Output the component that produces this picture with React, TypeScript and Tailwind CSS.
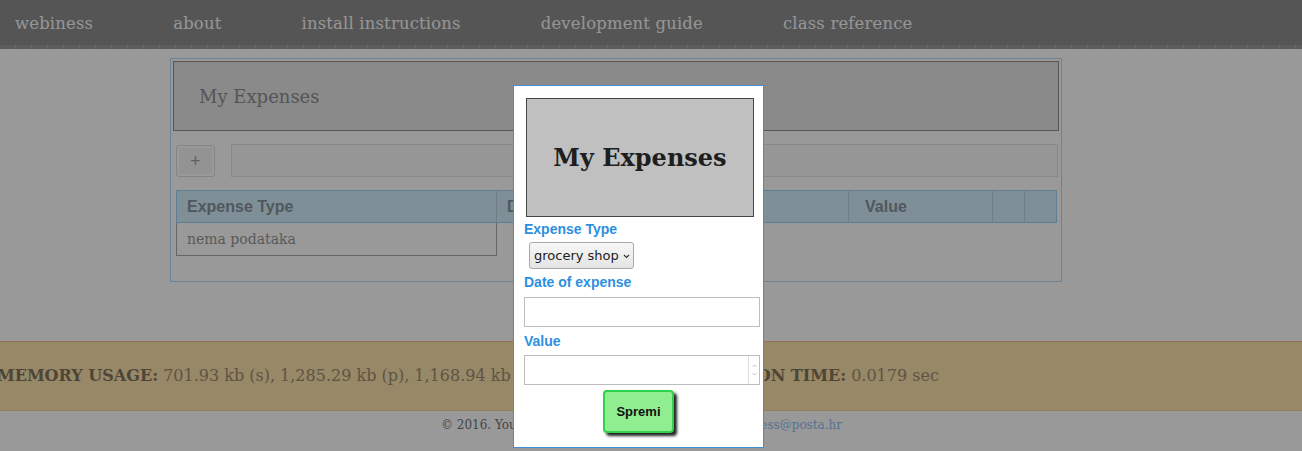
import React from "react";

const slab = "font-['DejaVu_Serif',serif]";
const sans = "font-['Liberation_Sans',Arial,sans-serif]";

function Nav() {
  const items = ["webiness", "about", "install instructions", "development guide", "class reference"];
  return (
    <div>
      <nav className={`h-[45px] bg-[#8e8e8e] flex items-center gap-[80px] pl-[15px] pt-[3px] ${slab}`}>
        {items.map((t) => (
          <a key={t} className="text-[16.4px] text-[#fafafa] tracking-[0.2px]">{t}</a>
        ))}
      </nav>
      <div className="h-[4px] bg-[repeating-linear-gradient(90deg,#9a9a9a_0px,#9a9a9a_15px,#b0b0b0_15px,#b0b0b0_16px)]" />
    </div>
  );
}

function MainPanel() {
  return (
    <div className="ml-[170px] mt-[9px] w-[892px] border border-[#b0dcff] p-[2px] pb-[25px]">
      <div className="h-[70px] bg-[#e6e6e6] border border-[#8e8e8e] flex items-center pl-[25px]">
        <h2 className={`${slab} text-[18px] text-[#8e8e8e]`}>My Expenses</h2>
      </div>
      <div className="flex items-center gap-[16px] pl-[3px] mt-[13px]">
        <button className="w-[39px] h-[32px] border border-[#dcdcdc] bg-[#f6f6f6] rounded-[3px] shadow-[inset_0_0_0_2px_#ffffff] flex items-center justify-center text-[#a0a0a0] text-[18px]">
          +
        </button>
        <div className="w-[827px] h-[33px] border border-[#e2e2e2] bg-[#fafafa]" />
      </div>
      <div className="ml-[3px] mt-[13px] w-[881px]">
        <div className={`flex h-[33px] bg-[#d2eefd] border border-[#9fd0f5] ${sans} font-bold text-[16px] text-[#86939c]`}>
          <div className="w-[320px] border-r border-[#b8d0e0] pl-[10px] flex items-center">Expense Type</div>
          <div className="w-[352px] border-r border-[#b8d0e0] pl-[10px] flex items-center">Date of expense</div>
          <div className="w-[144px] border-r border-[#b8d0e0] pl-[16px] flex items-center">Value</div>
          <div className="w-[32px] border-r border-[#b8d0e0]" />
          <div className="flex-1" />
        </div>
        <div className={`w-[321px] h-[33px] border border-t-0 border-[#aaaaaa] pl-[10px] flex items-center ${slab} text-[14px] text-[#969696]`}>
          nema podataka
        </div>
      </div>
    </div>
  );
}

function Footer() {
  return (
    <div>
      <div className={`mt-[59px] h-[70px] bg-[#fce3ad] border-t border-t-[#f2b892] border-b border-b-[#f0d890] flex items-center whitespace-nowrap ${slab} text-[16px] text-[#9d8c70] overflow-hidden`}>
        <span className="ml-[-3px] shrink-0">
          <b className="font-bold text-[#84735a]">MEMORY USAGE:</b> 701.93 kb (s), 1,285.29 kb (p), 1,168.94 kb (r)
        </span>
        <span className="ml-[138px] shrink-0">
          <b className="font-bold text-[#84735a]">EXECUTION TIME:</b> 0.0179 sec
        </span>
      </div>
      <p className={`mt-[5px] pl-[441px] ${slab} text-[12px] text-[#727272] whitespace-nowrap`}>
        © 2016. Your Name, all rights reserved. mail: <a className="text-[#8fbff0]">webiness@posta.hr</a>
      </p>
    </div>
  );
}

function Modal() {
  return (
    <div className="absolute left-[513px] top-[85px] w-[251px] h-[363px] bg-white border border-[#3d8fd8] pl-[10px] pr-[3px] pt-[12px]">
      <div className="ml-[2px] w-[228px] h-[119px] bg-[#c0c0c0] border border-[#444444] flex items-center justify-center">
        <h1 className={`${slab} font-bold text-[24px] text-[#1e1e1e]`}>My Expenses</h1>
      </div>
      <label className={`block mt-[4px] leading-[16px] ${sans} font-bold text-[14px] text-[#2d8fe0]`}>Expense Type</label>
      <div className="mt-[5px] ml-[5px] w-[105px] h-[27px] border border-[#a9a9a9] rounded-[3px] bg-[linear-gradient(#f7f7f7,#e4e4e4)] flex items-center pl-[4px] gap-[4px] font-['DejaVu_Sans',sans-serif] text-[13px] text-[#222]">
        <span>grocery shop</span>
        <svg width="7" height="5" viewBox="0 0 7 5" className="mt-[1px]">
          <path d="M1 1 L3.5 3.5 L6 1" fill="none" stroke="#333" strokeWidth="1.1" />
        </svg>
      </div>
      <label className={`block mt-[5px] leading-[16px] ${sans} font-bold text-[14px] text-[#2d8fe0]`}>Date of expense</label>
      <div className="mt-[7px] w-[236px] h-[30px] border border-[#bdbdbd] bg-white" />
      <label className={`block mt-[6px] leading-[16px] ${sans} font-bold text-[14px] text-[#2d8fe0]`}>Value</label>
      <div className="mt-[6px] w-[236px] h-[30px] border border-[#bdbdbd] bg-white flex justify-end">
        <div className="w-[11px] h-full border-l border-[#dddddd] flex flex-col items-center justify-center gap-[6px]">
          <svg width="5" height="3" viewBox="0 0 5 3"><path d="M1 2.5 L2.5 1 L4 2.5" fill="none" stroke="#999" strokeWidth="0.8" /></svg>
          <svg width="5" height="3" viewBox="0 0 5 3"><path d="M1 0.5 L2.5 2 L4 0.5" fill="none" stroke="#999" strokeWidth="0.8" /></svg>
        </div>
      </div>
      <button className={`mt-[5px] ml-[79px] w-[71px] h-[43px] bg-[#90ee90] border-2 border-[#2fd14a] rounded-[4px] shadow-[3px_3px_3px_#222222] ${sans} font-bold text-[13px] text-[#111]`}>
        Spremi
      </button>
    </div>
  );
}

export default function App() {
  return (
    <div className="relative w-[1302px] h-[451px] overflow-hidden bg-white">
      <Nav />
      <MainPanel />
      <Footer />
      <div className="absolute inset-0 bg-black/40" />
      <Modal />
    </div>
  );
}
